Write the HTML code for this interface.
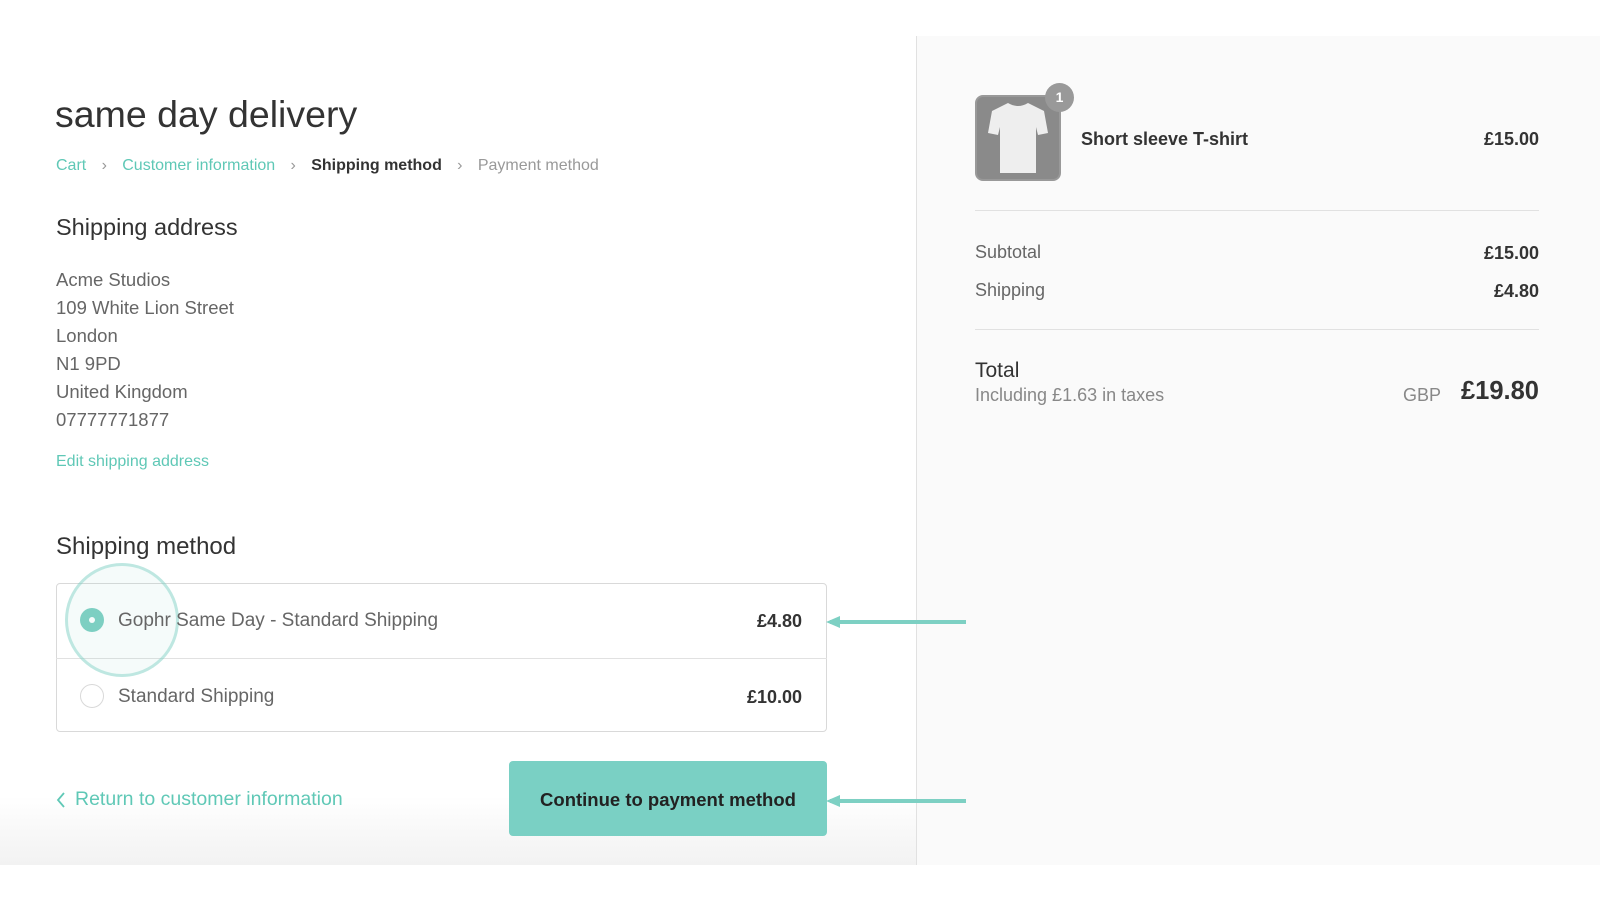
<!DOCTYPE html>
<html><head><meta charset="utf-8"><style>
*{margin:0;padding:0;box-sizing:border-box}
body{width:1600px;height:900px;background:#fff;font-family:"Liberation Sans",Arial,sans-serif;position:relative;overflow:hidden;color:#333}
.a{position:absolute;white-space:nowrap}
.left{position:absolute;left:0;top:36px;width:916px;height:829px;background:linear-gradient(#fff 0,#fff 760px,#f2f2f2 829px)}
.right{position:absolute;left:916px;top:36px;width:684px;height:829px;background:#fafafa;border-left:1px solid #e1e1e1}
.teal{color:#5fc8b6}
.addr{font-size:18.5px;color:#666;line-height:28px}
.hr{position:absolute;left:975px;width:564px;height:1px;background:#e1e1e1}
.sep{display:inline-block;width:36px;text-align:center;color:#999}
</style></head><body>
<div class="left"></div><div class="right"></div>

<div class="a" style="left:55px;top:93px;font-size:37.5px;color:#333">same day delivery</div>
<div class="a" style="left:56px;top:157px;font-size:16px;color:#999">
<span class="teal">Cart</span><span class="sep">&#x203A;</span><span class="teal">Customer information</span><span class="sep">&#x203A;</span><span style="color:#333;font-weight:bold">Shipping method</span><span class="sep">&#x203A;</span>Payment method</div>

<div class="a" style="left:56px;top:214px;font-size:23.5px;color:#333">Shipping address</div>
<div class="a addr" style="left:56px;top:266px">Acme Studios<br>109 White Lion Street<br>London<br>N1 9PD<br>United Kingdom<br>07777771877</div>
<div class="a teal" style="left:56px;top:453px;font-size:16px">Edit shipping address</div>

<div class="a" style="left:56px;top:533px;font-size:24px;color:#333">Shipping method</div>
<div class="a" style="left:56px;top:583px;width:771px;height:149px;border:1px solid #d9d9d9;border-radius:4px;background:#fff"></div>
<div class="a" style="left:56px;top:658px;width:771px;height:1px;background:#e1e1e1"></div>
<div class="a" style="left:80px;top:608px;width:24px;height:24px;border-radius:50%;background:#7dd0c3"></div>
<div class="a" style="left:89px;top:617px;width:6px;height:6px;border-radius:50%;background:#fff"></div>
<div class="a" style="left:65px;top:563px;width:114px;height:114px;border-radius:50%;border:3px solid rgba(125,208,195,.45);background:rgba(125,208,195,.08)"></div>
<div class="a" style="left:118px;top:610px;font-size:19px;color:#666">Gophr Same Day - Standard Shipping</div>
<div class="a" style="right:798px;top:611px;font-size:18px;color:#333;font-weight:bold">£4.80</div>
<div class="a" style="left:80px;top:684px;width:24px;height:24px;border-radius:50%;border:1px solid #d9d9d9;background:#fff"></div>
<div class="a" style="left:118px;top:686px;font-size:19px;color:#666">Standard Shipping</div>
<div class="a" style="right:798px;top:687px;font-size:18px;color:#333;font-weight:bold">£10.00</div>

<svg class="a" style="left:826px;top:614px" width="142" height="200" viewBox="0 0 142 200"><path d="M4 8H140" stroke="#7dd0c3" stroke-width="4"/><path d="M0 8L14 2V14Z" fill="#7dd0c3"/><path d="M4 187H140" stroke="#7dd0c3" stroke-width="4"/><path d="M0 187L14 181V193Z" fill="#7dd0c3"/></svg>

<svg class="a" style="left:56px;top:792px" width="10" height="16" viewBox="0 0 10 16"><path d="M8 1L2 8L8 15" stroke="#5fc8b6" stroke-width="1.8" fill="none"/></svg>
<div class="a teal" style="left:75px;top:788px;font-size:19.5px">Return to customer information</div>
<div class="a" style="left:509px;top:761px;width:318px;height:75px;background:#7ad0c4;border-radius:4px;font-size:18.5px;font-weight:bold;color:#222;text-align:center;line-height:77px">Continue to payment method</div>

<div class="a" style="left:975px;top:95px;width:86px;height:86px;border-radius:8px;background:#8a8a8a;border:2px solid #999"></div>
<svg class="a" style="left:988px;top:101px" width="60" height="74" viewBox="0 0 60 74"><path d="M20 2 Q30 8 40 2 L56 10 L60 32 L50 34 L48 26 L48 72 L12 72 L12 26 L10 34 L0 32 L4 10Z" fill="#eee"/></svg>
<div class="a" style="left:1045px;top:83px;width:29px;height:29px;border-radius:50%;background:#999;color:#fff;font-size:14px;font-weight:bold;text-align:center;line-height:29px">1</div>
<div class="a" style="left:1081px;top:129px;font-size:18px;font-weight:bold;color:#333">Short sleeve T-shirt</div>
<div class="a" style="right:61px;top:129px;font-size:18px;font-weight:bold;color:#333">£15.00</div>
<div class="hr" style="top:210px"></div>
<div class="a" style="left:975px;top:242px;font-size:18px;color:#666">Subtotal</div>
<div class="a" style="right:61px;top:243px;font-size:18px;font-weight:bold;color:#333">£15.00</div>
<div class="a" style="left:975px;top:280px;font-size:18px;color:#666">Shipping</div>
<div class="a" style="right:61px;top:281px;font-size:18px;font-weight:bold;color:#333">£4.80</div>
<div class="hr" style="top:329px"></div>
<div class="a" style="left:975px;top:359px;font-size:21px;color:#333">Total</div>
<div class="a" style="left:975px;top:385px;font-size:18px;color:#888">Including £1.63 in taxes</div>
<div class="a" style="right:159px;top:385px;font-size:18px;color:#888">GBP</div>
<div class="a" style="right:61px;top:377px;font-size:25.5px;font-weight:bold;color:#333">£19.80</div>
</body></html>
